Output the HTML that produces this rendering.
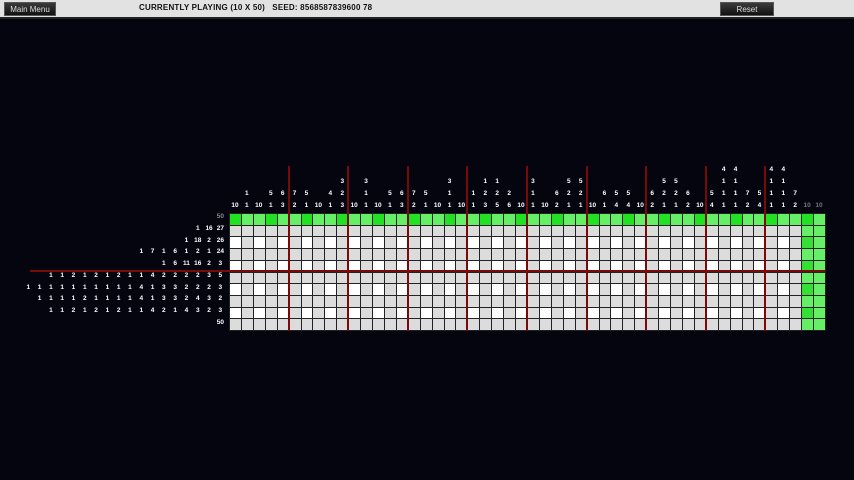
<!DOCTYPE html>
<html><head><meta charset="utf-8"><style>
body{margin:0;width:854px;height:480px;background:#05050f;overflow:hidden;position:relative;font-family:"Liberation Sans",sans-serif}
#bar{position:absolute;left:0;top:0;width:854px;height:17px;background:#e2e2e2;border-bottom:2px solid #222}
.btn{position:absolute;top:2px;height:14px;background:linear-gradient(#3a3a3a,#111);color:#ddd;font-size:8px;line-height:14px;text-align:center;border:1px solid #555;box-sizing:border-box}
#title{position:absolute;left:139px;top:3px;font-size:8px;font-weight:bold;color:#111;letter-spacing:.2px}
.cl{position:absolute;top:160px;width:11.92px;height:52px;display:flex;flex-direction:column;justify-content:flex-end;align-items:center;color:#fff;font-size:6.5px;font-weight:bold;line-height:12px}
.rl{position:absolute;right:628px;height:11.7px;display:flex;color:#fff;font-size:6.5px;font-weight:bold;line-height:11.7px}
.rl span{width:11.3px;text-align:center}
.c{position:absolute;box-sizing:border-box;border:1px solid #222}
</style></head><body>
<div id="bar"></div>
<div class="btn" style="left:4px;width:52px">Main Menu</div>
<div class="btn" style="left:720px;width:54px">Reset</div>
<div id="title">CURRENTLY PLAYING (10 X 50) &nbsp; SEED: 8568587839600 78</div>
<div id="g"></div>
<div class="rl" style="top:211px;color:#888"><span>50</span></div>
<div class="rl" style="top:223px"><span>1</span><span>16</span><span>27</span></div>
<div class="rl" style="top:235px"><span>1</span><span>18</span><span>2</span><span>26</span></div>
<div class="rl" style="top:246px"><span>1</span><span>7</span><span>1</span><span>6</span><span>1</span><span>2</span><span>1</span><span>24</span></div>
<div class="rl" style="top:258px"><span>1</span><span>6</span><span>11</span><span>16</span><span>2</span><span>3</span></div>
<div class="rl" style="top:270px"><span>1</span><span>1</span><span>2</span><span>1</span><span>2</span><span>1</span><span>2</span><span>1</span><span>1</span><span>4</span><span>2</span><span>2</span><span>2</span><span>2</span><span>3</span><span>5</span></div>
<div class="rl" style="top:282px"><span>1</span><span>1</span><span>1</span><span>1</span><span>1</span><span>1</span><span>1</span><span>1</span><span>1</span><span>1</span><span>4</span><span>1</span><span>3</span><span>3</span><span>2</span><span>2</span><span>2</span><span>3</span></div>
<div class="rl" style="top:293px"><span>1</span><span>1</span><span>1</span><span>1</span><span>2</span><span>1</span><span>1</span><span>1</span><span>1</span><span>4</span><span>1</span><span>3</span><span>3</span><span>2</span><span>4</span><span>3</span><span>2</span></div>
<div class="rl" style="top:305px"><span>1</span><span>1</span><span>2</span><span>1</span><span>2</span><span>1</span><span>2</span><span>1</span><span>1</span><span>4</span><span>2</span><span>1</span><span>4</span><span>3</span><span>2</span><span>3</span></div>
<div class="rl" style="top:317px"><span>50</span></div>
<div id="cols">
<div class="cl" style="left:229px">10</div>
<div class="cl" style="left:240.9px">1<br>1</div>
<div class="cl" style="left:252.8px">10</div>
<div class="cl" style="left:264.8px">5<br>1</div>
<div class="cl" style="left:276.7px">6<br>3</div>
<div class="cl" style="left:288.6px">7<br>2</div>
<div class="cl" style="left:300.5px">5<br>1</div>
<div class="cl" style="left:312.4px">10</div>
<div class="cl" style="left:324.4px">4<br>1</div>
<div class="cl" style="left:336.3px">3<br>2<br>3</div>
<div class="cl" style="left:348.2px">10</div>
<div class="cl" style="left:360.1px">3<br>1<br>1</div>
<div class="cl" style="left:372px">10</div>
<div class="cl" style="left:384px">5<br>1</div>
<div class="cl" style="left:395.9px">6<br>3</div>
<div class="cl" style="left:407.8px">7<br>2</div>
<div class="cl" style="left:419.7px">5<br>1</div>
<div class="cl" style="left:431.6px">10</div>
<div class="cl" style="left:443.6px">3<br>1<br>1</div>
<div class="cl" style="left:455.5px">10</div>
<div class="cl" style="left:467.4px">1<br>1</div>
<div class="cl" style="left:479.3px">1<br>2<br>3</div>
<div class="cl" style="left:491.2px">1<br>2<br>5</div>
<div class="cl" style="left:503.2px">2<br>6</div>
<div class="cl" style="left:515.1px">10</div>
<div class="cl" style="left:527px">3<br>1<br>1</div>
<div class="cl" style="left:538.9px">10</div>
<div class="cl" style="left:550.8px">6<br>2</div>
<div class="cl" style="left:562.8px">5<br>2<br>1</div>
<div class="cl" style="left:574.7px">5<br>2<br>1</div>
<div class="cl" style="left:586.6px">10</div>
<div class="cl" style="left:598.5px">6<br>1</div>
<div class="cl" style="left:610.4px">5<br>4</div>
<div class="cl" style="left:622.4px">5<br>4</div>
<div class="cl" style="left:634.3px">10</div>
<div class="cl" style="left:646.2px">6<br>2</div>
<div class="cl" style="left:658.1px">5<br>2<br>1</div>
<div class="cl" style="left:670px">5<br>2<br>1</div>
<div class="cl" style="left:682px">6<br>2</div>
<div class="cl" style="left:693.9px">10</div>
<div class="cl" style="left:705.8px">5<br>4</div>
<div class="cl" style="left:717.7px">4<br>1<br>1<br>1</div>
<div class="cl" style="left:729.6px">4<br>1<br>1<br>1</div>
<div class="cl" style="left:741.6px">7<br>2</div>
<div class="cl" style="left:753.5px">5<br>4</div>
<div class="cl" style="left:765.4px">4<br>1<br>1<br>1</div>
<div class="cl" style="left:777.3px">4<br>1<br>1<br>1</div>
<div class="cl" style="left:789.2px">7<br>2</div>
<div class="cl" style="left:801.2px;color:#777">10</div>
<div class="cl" style="left:813.1px;color:#777">10</div>
</div>
<script>
var g=document.getElementById('g'),h='';
var W=11.92,H=11.7,X=229,Y=213;
for(var r=0;r<10;r++)for(var c=0;c<50;c++){
 var col;
 if(r==0||c>=48){col=((c+r)%3==0)?'#22e022':'#66ee66';if(c>=48&&r>0)col=(c==48&&r%2==0)?'#33e033':'#66ee66';}
 else if(r>0&&r<9&&r%2==0&&c%2==0)col='#ffffff';
 else col='#dcdcdc';
 h+='<div class="c" style="left:'+(X+c*W)+'px;top:'+(Y+r*H)+'px;width:'+(W+1)+'px;height:'+(H+1)+'px;background:'+col+'"></div>';
}
for(var k=1;k<10;k++)h+='<div style="position:absolute;left:'+(X+k*5*W-1)+'px;top:166px;width:2px;height:165px;background:#7a0a0a"></div>';
h+='<div style="position:absolute;left:30px;top:270px;width:795px;height:2px;background:#7a0a0a"></div>';
g.innerHTML=h;
</script>
</body></html>
